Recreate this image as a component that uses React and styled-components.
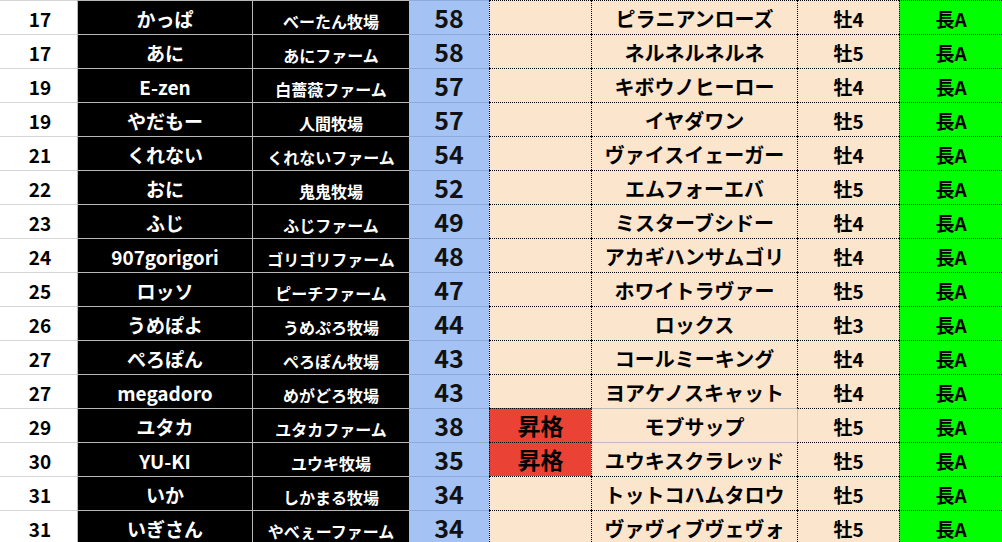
import React from 'react'
import styled, { createGlobalStyle } from 'styled-components'

const GlobalStyle = createGlobalStyle`
  html, body {
    margin: 0;
    padding: 0;
    background: #ffffff;
    overflow: hidden;
  }
  body {
    font-family: "Noto Sans CJK JP", "Noto Sans", sans-serif;
  }
`

const rows = [
  [17, 'かっぱ', 'べーたん牧場', 58, '', 'ピラニアンローズ', '牡4'],
  [17, 'あに', 'あにファーム', 58, '', 'ネルネルネルネ', '牡5'],
  [19, 'E-zen', '白薔薇ファーム', 57, '', 'キボウノヒーロー', '牡4'],
  [19, 'やだもー', '人間牧場', 57, '', 'イヤダワン', '牡5'],
  [21, 'くれない', 'くれないファーム', 54, '', 'ヴァイスイェーガー', '牡4'],
  [22, 'おに', '鬼鬼牧場', 52, '', 'エムフォーエバ', '牡5'],
  [23, 'ふじ', 'ふじファーム', 49, '', 'ミスターブシドー', '牡4'],
  [24, '907gorigori', 'ゴリゴリファーム', 48, '', 'アカギハンサムゴリ', '牡4'],
  [25, 'ロッソ', 'ピーチファーム', 47, '', 'ホワイトラヴァー', '牡5'],
  [26, 'うめぽよ', 'うめぷろ牧場', 44, '', 'ロックス', '牡3'],
  [27, 'ぺろぽん', 'ぺろぽん牧場', 43, '', 'コールミーキング', '牡4'],
  [27, 'megadoro', 'めがどろ牧場', 43, '', 'ヨアケノスキャット', '牡4'],
  [29, 'ユタカ', 'ユタカファーム', 38, '昇格', 'モブサップ', '牡5'],
  [30, 'YU-KI', 'ユウキ牧場', 35, '昇格', 'ユウキスクラレッド', '牡5'],
  [31, 'いか', 'しかまる牧場', 34, '', 'トットコハムタロウ', '牡5'],
  [31, 'いぎさん', 'やべぇーファーム', 34, '', 'ヴァヴィブヴェヴォ', '牡5'],
]

// index of the row whose horse cell has a plain grey frame
const framedRow = 12

const Sheet = styled.div`
  width: 1002px;
  display: flex;
  flex-direction: column;
`

const Row = styled.div`
  display: grid;
  grid-template-columns: 77px 175px 157px 80px 102px 206px 102px 103px;
  height: 34px;
`

const Cell = styled.div`
  box-sizing: border-box;
  display: flex;
  align-items: center;
  justify-content: center;
  font-weight: 700;
  white-space: nowrap;
  overflow: hidden;
  line-height: 1;
  padding-top: 2px;
`

const Rank = styled(Cell)`
  border-top: 1px solid #d6d6d6;
  color: #000;
  font-size: 19px;
  padding-left: 3px;
`

const Name = styled(Cell)`
  background: #000;
  color: #fff;
  border-top: 1px solid #b8b8b8;
  border-left: 1px solid #b8b8b8;
  font-size: 19px;
`

const Farm = styled(Name)`
  font-size: 16px;
  align-items: flex-end;
  padding-top: 0;
  padding-bottom: 5px;
`

const Score = styled(Cell)`
  background: #a4c2f4;
  color: #111;
  border-top: 1px solid #8eaad8;
  font-size: 25px;
  padding-top: 0;
`

const Dotted = styled(Cell)`
  border-top: 1px dotted #000;
  border-left: 1px dotted #000;
  background: #fce5cd;
  color: #000;
`

const Promo = styled(Dotted)`
  background: ${p => (p.$up ? '#ea4335' : '#fce5cd')};
  font-size: 23px;
  padding-top: 0;
`

const Horse = styled(Dotted)`
  font-size: 20px;
  ${p => p.$topSolid && 'border-top: 1px solid #bdbdbd;'}
`

const Sex = styled(Dotted)`
  font-size: 19px;
  ${p => p.$leftSolid && 'border-left: 1px solid #bdbdbd;'}
`

const Long = styled(Dotted)`
  background: #00ff00;
  font-size: 19px;
`

export default function App() {
  return (
    <>
      <GlobalStyle />
      <Sheet>
        {rows.map(([rank, name, farm, score, promo, horse, sex], i) => (
          <Row key={i}>
            <Rank>{rank}</Rank>
            <Name>{name}</Name>
            <Farm>{farm}</Farm>
            <Score>{score}</Score>
            <Promo $up={!!promo}>{promo}</Promo>
            <Horse $topSolid={i === framedRow || i === framedRow + 1}>{horse}</Horse>
            <Sex $leftSolid={i === framedRow}>{sex}</Sex>
            <Long>長A</Long>
          </Row>
        ))}
      </Sheet>
    </>
  )
}
